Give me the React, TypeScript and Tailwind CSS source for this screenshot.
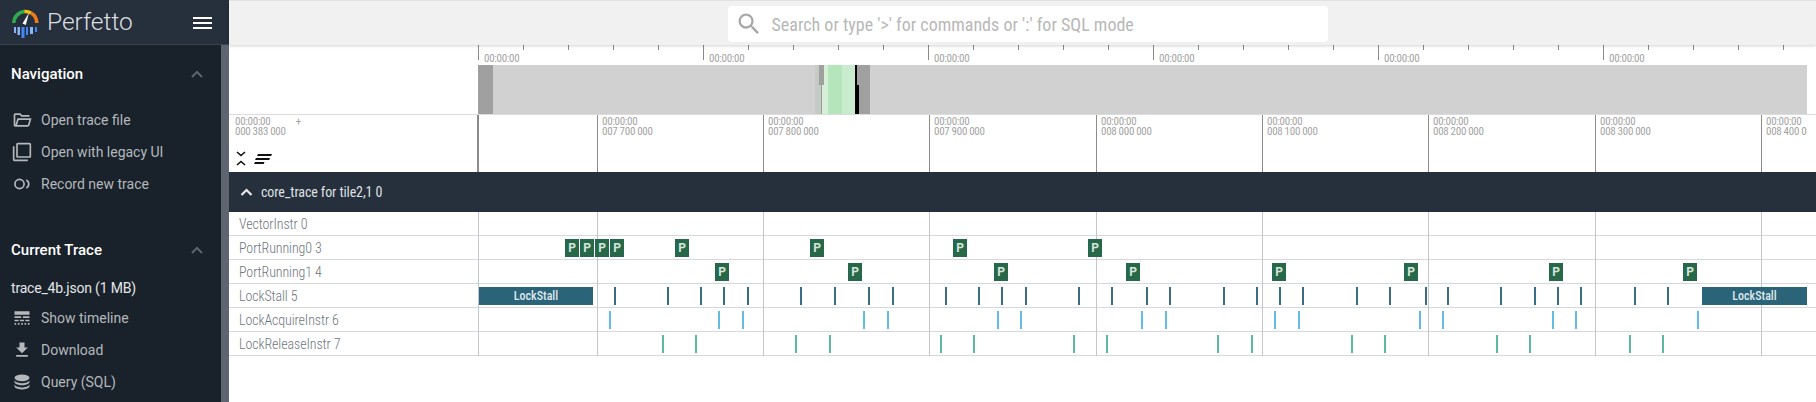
import React from "react";

const CANVAS_X = 478;

const OVERVIEW_TICKS = Array.from({ length: 30 }, (_, i) => i);
const AXIS_TICKS = [
  { x: 597, label: "007 700 000" },
  { x: 763, label: "007 800 000" },
  { x: 929, label: "007 900 000" },
  { x: 1096, label: "008 000 000" },
  { x: 1262, label: "008 100 000" },
  { x: 1428, label: "008 200 000" },
  { x: 1595, label: "008 300 000" },
  { x: 1761, label: "008 400 000" },
];

const PORT0 = [565, 580, 595, 610, 675, 810, 953, 1088];
const PORT1 = [715, 848, 994, 1126, 1272, 1404, 1549, 1683];
const STALLS = [
  614, 667, 700, 723, 747, 800, 834, 868, 892, 945, 978, 1001, 1025, 1078, 1111, 1146, 1169, 1223,
  1256, 1279, 1302, 1356, 1389, 1425, 1447, 1500, 1534, 1557, 1580, 1634, 1667,
];
const ACQUIRES = [609, 718, 742, 863, 887, 997, 1020, 1141, 1165, 1274, 1298, 1419, 1442, 1552, 1575, 1697];
const RELEASES = [662, 695, 795, 829, 940, 973, 1073, 1106, 1217, 1251, 1351, 1384, 1496, 1529, 1629, 1662];

const condensed = "[font-stretch:75%]";
const timeText = "text-[11px] leading-[10px] tracking-[-0.3px] text-[#a4a4a4] [font-stretch:75%]";

function MaterialIcon({ d }: { d: string }) {
  return (
    <svg viewBox="0 0 24 24" className="w-5 h-5 fill-[#b4b8bc] shrink-0">
      <path d={d} />
    </svg>
  );
}

const ICONS = {
  folder:
    "M4 20q-.825 0-1.412-.587T2 18V6q0-.825.588-1.412T4 4h6l2 2h9v2h-9.825l-2-2H4v12l2.4-8h17.1l-2.575 8.575q-.2.65-.737 1.038T19 20H4Zm2.1-2H19l1.8-6H7.9L6.1 18Z",
  legacy:
    "M3 5H1v16c0 1.1.9 2 2 2h16v-2H3V5zm18-4H7c-1.1 0-2 .9-2 2v14c0 1.1.9 2 2 2h14c1.1 0 2-.9 2-2V3c0-1.1-.9-2-2-2zm0 16H7V3h14v14z",
  record:
    "M9 5.5a6.5 6.5 0 1 0 0 13 6.5 6.5 0 0 0 0-13Zm0 2a4.5 4.5 0 1 1 0 9 4.5 4.5 0 0 1 0-9ZM17 6.3v2.2a4 4 0 0 1 0 7v2.2a6 6 0 0 0 0-11.4Z",
  timeline:
    "M3 16h5v-2H3v2zm6.5 0h5v-2h-5v2zm6.5 0h5v-2h-5v2zM3 20h2v-2H3v2zm4 0h2v-2H7v2zm4 0h2v-2h-2v2zm4 0h2v-2h-2v2zm4 0h2v-2h-2v2zM3 12h8v-2H3v2zm10 0h8v-2h-8v2zM3 4v4h18V4H3z",
  download: "M19 9h-4V3H9v6H5l7 7 7-7zM5 18v2h14v-2H5z",
  database:
    "M12 11q3.75 0 6.375-1.175T21 7q0-1.65-2.625-2.825T12 3Q8.25 3 5.625 4.175T3 7q0 1.65 2.625 2.825T12 11Zm0 2.5q1.025 0 2.563-.213t2.962-.687q1.425-.475 2.45-1.237T21 9.5V12q0 1.1-1.025 1.863t-2.45 1.237q-1.425.475-2.962.688T12 16q-1.025 0-2.563-.212T6.475 15.1q-1.425-.475-2.45-1.237T3 12V9.5q0 1.1 1.025 1.863t2.45 1.237q1.425.475 2.962.688T12 13.5Zm0 5q1.025 0 2.563-.213t2.962-.687q1.425-.475 2.45-1.237T21 14.5V17q0 1.1-1.025 1.863t-2.45 1.237q-1.425.475-2.962.688T12 21q-1.025 0-2.563-.212T6.475 20.1q-1.425-.475-2.45-1.237T3 17v-2.5q0 1.1 1.025 1.863t2.45 1.237q1.425.475 2.962.688T12 18.5Z",
};

function Chevron() {
  return (
    <svg viewBox="0 0 12 8" className="w-3 h-2 fill-none stroke-[#5c646e] stroke-2">
      <path d="M1 7l5-5 5 5" />
    </svg>
  );
}

function Logo() {
  return (
    <svg viewBox="0 0 28 30" className="w-7 h-[30px] shrink-0 fill-none">
      <g strokeWidth="3.6">
        <path d="M2.8 15A11.5 11.5 0 0 1 13.3 3.54" stroke="#2fa84f" />
        <path d="M13.3 3.54A11.5 11.5 0 0 1 20.05 5.04" stroke="#f4c20d" />
        <path d="M20.05 5.04A11.5 11.5 0 0 1 25.8 15" stroke="#ee7a1c" />
      </g>
      <path d="M11.5 15.5L18 4.7l-3.2 12.2z" fill="#ffffff" />
      <rect x="3" y="19" width="2" height="6" fill="#8ab4f8" />
      <rect x="6.5" y="19" width="2.5" height="8" fill="#8ab4f8" />
      <rect x="10.5" y="19" width="3" height="11" fill="#4285f4" />
      <rect x="15" y="19" width="2" height="8" fill="#4285f4" />
      <rect x="19" y="19" width="3" height="7" fill="#8ab4f8" />
      <rect x="24" y="19" width="2" height="5" fill="#4285f4" />
    </svg>
  );
}

function NavItem({ icon, label }: { icon: string; label: string }) {
  return (
    <div className="flex items-center h-8 pl-3 gap-[9px] text-[14px] text-[#b4b8bc]">
      <MaterialIcon d={icon} />
      <span>{label}</span>
    </div>
  );
}

function SectionHeader({ title }: { title: string }) {
  return (
    <div className="flex items-center justify-between pl-[11px] pr-[18px] h-6">
      <span className="text-[15px] font-medium text-white">{title}</span>
      <Chevron />
    </div>
  );
}

function Sidebar() {
  return (
    <aside className="w-[229px] h-full shrink-0 flex flex-col bg-[#19212b]">
      <div className="h-[45px] shrink-0 flex items-center pl-[11px] pt-[1px] bg-[#262f3c] border-b border-[#39424e]">
        <Logo />
        <span className="ml-2 text-[24.5px] font-light leading-none text-[#dcdee0]">Perfetto</span>
        <div className="ml-auto mr-[17px] flex flex-col gap-[3px]">
          <div className="w-[19px] h-[2px] bg-white" />
          <div className="w-[19px] h-[2px] bg-white" />
          <div className="w-[19px] h-[2px] bg-white" />
        </div>
      </div>
      <div className="flex-1 flex min-h-0">
        <div className="flex-1 min-w-0 overflow-hidden pt-[17px]">
          <SectionHeader title="Navigation" />
          <div className="mt-[18px]">
            <NavItem icon={ICONS.folder} label="Open trace file" />
            <NavItem icon={ICONS.legacy} label="Open with legacy UI" />
            <NavItem icon={ICONS.record} label="Record new trace" />
          </div>
          <div className="mt-[38px]">
            <SectionHeader title="Current Trace" />
          </div>
          <div className="mt-[12px] h-7 pl-[11px] flex items-center text-[14px] text-[#e4e6e8] tracking-[-0.2px]">
            trace_4b.json (1 MB)
          </div>
          <NavItem icon={ICONS.timeline} label="Show timeline" />
          <NavItem icon={ICONS.download} label="Download" />
          <NavItem icon={ICONS.database} label="Query (SQL)" />
        </div>
        <div className="w-2 shrink-0 bg-[#5f6570]" />
      </div>
    </aside>
  );
}

function Topbar() {
  return (
    <header className="relative z-10 h-[45px] shrink-0 flex justify-center pt-[5px] pl-[10px] bg-[#f1f1f1] border-t border-[#e2e2e2] shadow-[0_1px_3px_rgba(0,0,0,0.18)]">
      <div className="w-[600px] h-[36px] flex items-center pl-[7px] rounded-sm bg-white">
        <svg viewBox="0 0 24 24" className="w-7 h-7 fill-[#a8a8a8]">
          <path d="M15.5 14h-.79l-.28-.27A6.47 6.47 0 0 0 16 9.5 6.5 6.5 0 1 0 9.5 16c1.61 0 3.09-.59 4.23-1.57l.27.28v.79l5 4.99L20.49 19l-4.99-5zm-6 0C7.01 14 5 11.99 5 9.5S7.01 5 9.5 5 14 7.01 14 9.5 11.99 14 9.5 14z" />
        </svg>
        <span className={`ml-[9px] text-[18px] text-[#b8b8b8] ${condensed}`}>
          Search or type '&gt;' for commands or ':' for SQL mode
        </span>
      </div>
    </header>
  );
}

function Overview() {
  return (
    <div className="h-[70px] shrink-0 flex border-b border-[#dcdcdc]">
      <div className="w-[249px] shrink-0" />
      <div className="relative w-[1329px] overflow-hidden">
        {OVERVIEW_TICKS.map((i) => {
          const big = i % 5 === 0;
          return (
            <div
              key={i}
              className={big ? "absolute top-0 w-px h-[15px] bg-[#8a8a8a]" : "absolute top-0 w-px h-[5px] bg-[#8a8a8a]"}
              style={{ left: i * 45 }}
            />
          );
        })}
        {OVERVIEW_TICKS.filter((i) => i % 5 === 0).map((i) => (
          <span
            key={i}
            className={`absolute top-[9px] ${timeText}`}
            style={{ left: i * 45 + 6 }}
          >
            00:00:00
          </span>
        ))}
        {/* selection shading */}
        <div className="absolute left-0 right-0 top-5 bottom-0 bg-[#d1d1d1]">
          <div className="absolute left-0 top-0 bottom-0 w-[15px] bg-[#a0a0a0]" />
          <div className="absolute left-[337px] top-0 bottom-0 w-[6px] bg-[#c4cac4]" />
          <div className="absolute left-[343px] top-0 bottom-0 w-[7px] bg-[#d6f0d8]" />
          <div className="absolute left-[350px] top-0 bottom-0 w-[14px] bg-[#b5e6bb]" />
          <div className="absolute left-[364px] top-0 bottom-0 w-[13px] bg-[#c9ecce]" />
          <div className="absolute left-[377px] top-0 bottom-0 w-[4px] bg-black" />
          <div className="absolute left-[381px] top-0 bottom-0 w-[11px] bg-[#a0a0a0]" />
          <div className="absolute left-[343px] top-5 bottom-0 w-px bg-[#9a9a9a]" />
          <div className="absolute left-[341px] top-0 h-5 w-[5px] bg-[#a0a0a0]" />
          <div className="absolute left-[379px] top-0 h-5 w-[5px] bg-[#a0a0a0]" />
        </div>
      </div>
    </div>
  );
}

function TimeAxis() {
  return (
    <div className="h-[57px] shrink-0 flex">
      <div className="w-[248px] shrink-0 pl-[6px] pt-[2px]">
        <div className={`w-[66px] flex justify-between ${timeText}`}>
          <span>00:00:00</span>
          <span>+</span>
        </div>
        <div className={timeText}>000 383 000</div>
        <div className="flex items-center mt-[14px] ml-[1px] gap-[8px]">
          <svg viewBox="0 0 10 15" className="w-[10px] h-[15px] fill-none stroke-[#111] stroke-[1.6]">
            <path d="M1 1l4 3.5L9 1M1 14l4-3.5L9 14" />
          </svg>
          <svg viewBox="0 0 18 10" className="w-[18px] h-[10px] fill-[#111]">
            <path d="M4 0h14l-.8 2H3zM2 4h14l-.8 2H1zM1 8h9.5l-.8 2H0z" />
          </svg>
        </div>
      </div>
      <div className="relative flex-1 overflow-hidden">
        <div className="absolute left-0 top-0 bottom-0 w-[2px] bg-[#8c8c8c]" />
        <div className="absolute left-[1330px] right-0 top-0 bottom-0 bg-white z-10" />
        {AXIS_TICKS.map((t) => (
          <div key={t.x} className="absolute top-0 bottom-0" style={{ left: t.x - 477 }}>
            <div className="absolute left-0 top-0 bottom-0 w-px bg-[#8c8c8c]" />
            <div className={`absolute left-[5px] top-[2px] whitespace-nowrap ${timeText}`}>
              00:00:00
              <br />
              {t.label}
            </div>
          </div>
        ))}
      </div>
    </div>
  );
}

function TrackRow({ label, children }: { label: string; children?: React.ReactNode }) {
  return (
    <div className="h-6 flex border-b border-[#d6d8dc]">
      <div className={`w-[249px] shrink-0 pl-[10px] text-[14px] font-light leading-[24px] tracking-[-0.1px] text-[#6f757d] ${condensed}`}>{label}</div>
      <div className="relative flex-1">{children}</div>
    </div>
  );
}

function PortSlice({ x }: { x: number }) {
  return (
    <div
      className="absolute top-[3px] w-[14px] h-[18px] flex items-center justify-center bg-[#27684a] text-[12px] font-bold text-[#d5e6dc]"
      style={{ left: x - CANVAS_X }}
    >
      P
    </div>
  );
}

function Bars({ xs, className }: { xs: number[]; className: string }) {
  return (
    <>
      {xs.map((x) => (
        <div key={x} className={`absolute top-[3px] w-[2px] h-[18px] ${className}`} style={{ left: x - CANVAS_X }} />
      ))}
    </>
  );
}

function StallBlock({ x, width }: { x: number; width: number }) {
  return (
    <div
      className={`absolute top-[3px] h-[18px] flex items-center justify-center bg-[#2b6378] text-[12px] font-medium text-[#dde8ec] ${condensed}`}
      style={{ left: x - CANVAS_X, width }}
    >
      LockStall
    </div>
  );
}

function Tracks() {
  return (
    <div className="relative">
      <div className="absolute left-[249px] top-0 bottom-0 w-px bg-[#c3c7d2] z-10" />
      {AXIS_TICKS.map((t) => (
        <div key={t.x} className="absolute top-0 bottom-0 w-px bg-[#c6c6ca]" style={{ left: t.x - 229 }} />
      ))}
      <TrackRow label="VectorInstr 0" />
      <TrackRow label="PortRunning0 3">
        {PORT0.map((x) => (
          <PortSlice key={x} x={x} />
        ))}
      </TrackRow>
      <TrackRow label="PortRunning1 4">
        {PORT1.map((x) => (
          <PortSlice key={x} x={x} />
        ))}
      </TrackRow>
      <TrackRow label="LockStall 5">
        <StallBlock x={479} width={114} />
        <Bars xs={STALLS} className="bg-[#3a6e86]" />
        <StallBlock x={1702} width={105} />
      </TrackRow>
      <TrackRow label="LockAcquireInstr 6">
        <Bars xs={ACQUIRES} className="bg-[#62bde0]" />
      </TrackRow>
      <TrackRow label="LockReleaseInstr 7">
        <Bars xs={RELEASES} className="bg-[#5cb8a2]" />
      </TrackRow>
    </div>
  );
}

export default function App() {
  return (
    <div className="w-[1816px] h-[402px] flex overflow-hidden bg-white font-['Roboto',sans-serif]">
      <Sidebar />
      <main className="flex-1 min-w-0 flex flex-col">
        <Topbar />
        <Overview />
        <TimeAxis />
        <div className="h-10 shrink-0 flex items-center pl-[11px] gap-[8px] bg-[#262f3c]">
          <svg viewBox="0 0 12 8" className="w-[13px] h-2 fill-none stroke-[#e8e8e8] stroke-[2.2]">
            <path d="M1 7l5-5 5 5" />
          </svg>
          <span className={`text-[14px] tracking-[-0.1px] text-[#dfe1e4] ${condensed}`}>core_trace for tile2,1 0</span>
        </div>
        <Tracks />
      </main>
    </div>
  );
}
